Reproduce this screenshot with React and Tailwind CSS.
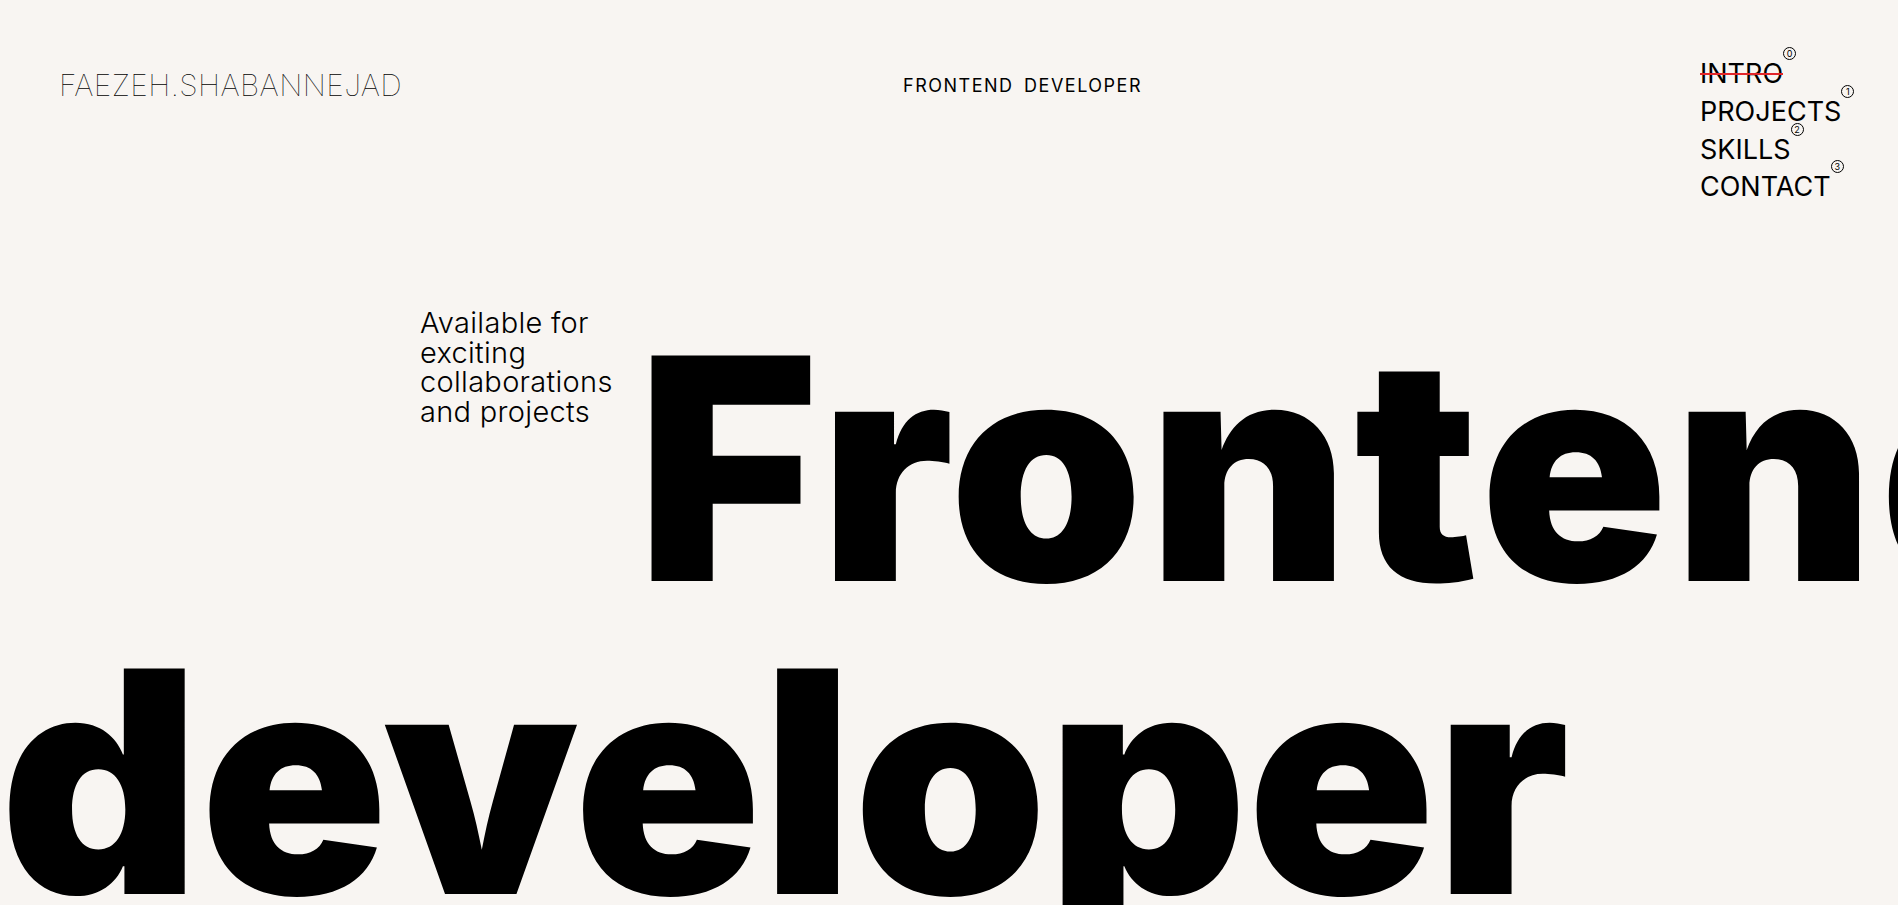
import React from "react";

const navItems = [
  { label: "INTRO", n: "0", active: true },
  { label: "PROJECTS", n: "1" },
  { label: "SKILLS", n: "2" },
  { label: "CONTACT", n: "3" },
];

function Badge({ n }) {
  return (
    <span className="absolute -top-[8px] -right-[13px] flex h-[13px] w-[13px] items-center justify-center rounded-full border border-black text-[9px] leading-none font-normal">
      {n}
    </span>
  );
}

export default function App() {
  return (
    <div className="min-h-screen w-full overflow-hidden bg-[#f8f5f2] text-black font-['Inter',sans-serif]">
      <header className="flex items-start pt-[54px]">
        <div className="ml-[59px] mt-[16px] w-[844px] shrink-0 text-[30px] leading-[30px] font-thin tracking-[0.4px]">
          FAEZEH.SHABANNEJAD
        </div>
        <div className="mt-[23px] w-[797px] shrink-0 text-[18px] leading-[18px] font-normal tracking-[1.5px] [word-spacing:4px]">
          FRONTEND DEVELOPER
        </div>
        <nav className="mt-[1px] flex flex-col items-start text-[27px] leading-[37.8px] font-normal">
          {navItems.map((item) => (
            <a key={item.label} className="relative inline-block">
              <span className="relative">
                {item.label}
                {item.active && (
                  <span className="absolute left-0 right-0 top-[15.5px] h-[2.5px] bg-[#e3262a]" />
                )}
              </span>
              <Badge n={item.n} />
            </a>
          ))}
        </nav>
      </header>

      <main className="mt-[106px]">
        <div className="flex items-start pl-[420px]">
          <p className="-mt-[4px] w-[217px] shrink-0 text-[29px] leading-[29.5px] font-light tracking-[0.3px]">
            Available for exciting collaborations and projects
          </p>
          <h1 className="whitespace-nowrap text-[310px] leading-[313px] font-black tracking-[5px]">
            Frontend
          </h1>
        </div>
        <h1 className="whitespace-nowrap text-[310px] leading-[313px] font-black tracking-[0px]">
          developer
        </h1>
      </main>
    </div>
  );
}
